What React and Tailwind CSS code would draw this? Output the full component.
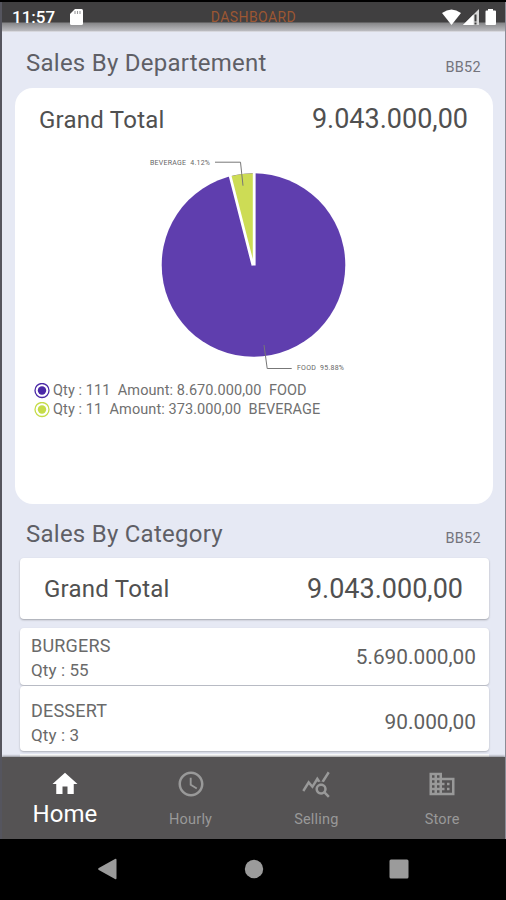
import { MdHome, MdAccessTime, MdQueryStats, MdBusiness } from 'react-icons/md';

const departments = [
  { name: 'FOOD', qty: 111, amount: '8.670.000,00', color: '#4a28a6' },
  { name: 'BEVERAGE', qty: 11, amount: '373.000,00', color: '#c5dc48' },
];

const categories = [
  { name: 'BURGERS', qty: 55, amount: '5.690.000,00', height: 'h-[57px] pt-0.5' },
  { name: 'DESSERT', qty: 3, amount: '90.000,00', height: 'h-[65px] pt-[9px]' },
];

const tabs = [
  { label: 'Home', icon: MdHome, active: true },
  { label: 'Hourly', icon: MdAccessTime },
  { label: 'Selling', icon: MdQueryStats },
  { label: 'Store', icon: MdBusiness },
];

function StatusBar() {
  return (
    <header className="h-[30px] shrink-0 bg-[linear-gradient(to_bottom,#403f40_0,#403f40_20px,#868688_21px,#bcbcc0_29px,#f2f3fa_30px)]">
      <div className="grid h-[27px] grid-cols-3 items-center">
        <div className="flex items-center pt-[3px] pl-[10px] text-white">
          <span className="text-[17px] leading-5 font-medium">11:57</span>
          <svg className="ml-[15px]" width="13" height="16" viewBox="0 0 13 16">
            <path d="M5 0h6.5Q13 0 13 1.500V14.500Q13 16 11.500 16h-10Q0 16 0 14.500V5z" fill="#fff" />
            <path d="M5 2v3M7.500 2v3M10 2v3" stroke="#9a9a9c" strokeWidth="1.100" />
          </svg>
        </div>
        <span className="pt-[3px] text-center text-[14px] leading-5 tracking-[0.4px] text-[#9c5733]">DASHBOARD</span>
        <svg className="ml-auto mr-[8px] mt-[3px]" width="55" height="17" viewBox="0 0 55 17">
          <path d="M0 4Q9.500-3 19 4L9.500 16z" fill="#fff" />
          <path d="M37 0V16H21z" fill="#d8d8d8" />
          <path d="M31.500 5.500V16H21z" fill="#fff" />
          <path d="M33.500 5.500v7M33.500 13.500v2" stroke="#3c3c3c" strokeWidth="2" />
          <path d="M46 0h5v1.500h2q1 0 1 1v12.500q0 1-1 1h-8.500q-1 0-1-1V2.500q0-1 1-1H46z" fill="#fff" />
        </svg>
      </div>
    </header>
  );
}

function SectionTitle({ title, className }) {
  return (
    <div className={`flex items-center justify-between pr-6 pl-6 ${className}`}>
      <h2 className="text-[24px] leading-8 tracking-[0.25px] text-[#5f5f66]">{title}</h2>
      <span className="pt-[9px] text-[14.5px] leading-5 tracking-[0.3px] text-[#74747c]">BB52</span>
    </div>
  );
}

function GrandTotal({ className }) {
  return (
    <div className={`flex items-center justify-between ${className}`}>
      <span className="pt-px text-[24px] leading-8 tracking-[0.25px] text-[#505050]">Grand Total</span>
      <span className="text-[27px] leading-8 text-[#505050]">9.043.000,00</span>
    </div>
  );
}

function PieChart() {
  return (
    <svg className="mx-auto block" width="240" height="230" viewBox="134 150 240 230" fontFamily="Roboto, sans-serif">
      <circle cx="253.500" cy="265" r="91.800" fill="#5f3eae" />
      <path d="M253.500 265L230 176.300A91.800 91.800 0 0 1 253.500 173.200z" fill="#cddc55" />
      <path d="M254.200 265.500V172M253 265.500L230 175.500" stroke="#fff" strokeWidth="2.800" fill="none" />
      <path d="M215 162.200h25.500l2.500 23.500" stroke="#777" fill="none" />
      <path d="M264 345l3.200 23.500h24.500" stroke="#777" fill="none" />
      <text x="150" y="164.500" fontSize="7" fill="#666" textLength="60" xmlSpace="preserve">BEVERAGE  4.12%</text>
      <text x="297" y="370.300" fontSize="7" fill="#666" textLength="47" xmlSpace="preserve">FOOD  95.88%</text>
    </svg>
  );
}

function Legend() {
  return (
    <ul className="mt-0.5 pl-[18.5px]">
      {departments.map((d) => (
        <li key={d.name} className="flex h-[18.5px] items-center gap-[3.5px] text-[14.5px] tracking-[0.08px] whitespace-pre text-[#707070]">
          <svg width="16" height="16" viewBox="0 0 16 16">
            <circle cx="8" cy="7.500" r="7" fill="none" stroke={d.color} strokeWidth="1.300" />
            <circle cx="8" cy="7.500" r="4.200" fill={d.color} />
          </svg>
          <span>{`Qty : ${d.qty}  Amount: ${d.amount}  ${d.name}`}</span>
        </li>
      ))}
    </ul>
  );
}

function CategoryRow({ name, qty, amount, height }) {
  return (
    <div className={`flex shrink-0 items-center justify-between rounded bg-white pr-[13px] pl-[11px] shadow-[0_1px_2px_rgba(0,0,0,0.25)] ${height}`}>
      <div className="text-[#6a6a6a]">
        <p className="text-[18px] leading-6 tracking-[0.2px]">{name}</p>
        <p className="text-[17px] leading-6 tracking-[0.1px]">{`Qty : ${qty}`}</p>
      </div>
      <span className="text-[20.8px] text-[#606060]">{amount}</span>
    </div>
  );
}

function TabBar() {
  return (
    <nav className="grid h-[82px] shrink-0 grid-cols-4 bg-[#555354] shadow-[0_-1px_2px_rgba(0,0,0,0.4)]">
      {tabs.map(({ label, icon: Icon, active }) => (
        <div key={label} className={`flex flex-col items-center pt-3 ${active ? 'text-white' : 'text-[#999]'}`}>
          <Icon size={30} />
          <span className={active ? 'pt-px text-[24px] leading-7' : 'mt-[11px] text-[14.5px] leading-5 tracking-[0.2px]'}>{label}</span>
        </div>
      ))}
    </nav>
  );
}

function SystemNav() {
  return (
    <div className="flex h-[59px] shrink-0 items-center justify-center bg-black">
      <svg width="311" height="22" viewBox="0 0 311 22" fill="#9b9b9b">
        <path d="M17 1q1.500-1 1.500 1v18q0 2-1.500 1L.8 12q-1.300-1 0-2z" />
        <circle cx="156" cy="11" r="9.200" />
        <rect x="291.500" y="1.500" width="19" height="19" rx="1.500" />
      </svg>
    </div>
  );
}

export default function App() {
  return (
    <div className="flex h-[900px] w-[506px] flex-col overflow-hidden bg-black pt-0.5 font-['Roboto',sans-serif]">
      <div className="flex h-[837px] shrink-0 flex-col overflow-hidden border-r border-l-2 border-r-[#8c8c96] border-l-[#55555e] bg-[#e6e9f4]">
        <StatusBar />
        <main className="flex min-h-0 flex-1 flex-col overflow-hidden">
          <SectionTitle title="Sales By Departement" className="h-[56px] shrink-0 pt-1.5" />
          <section className="mr-3 ml-[13px] h-[416px] shrink-0 rounded-[18px] bg-white">
            <GrandTotal className="h-[62px] pr-[25px] pl-6" />
            <PieChart />
            <Legend />
          </section>
          <SectionTitle title="Sales By Category" className="h-[54px] shrink-0 pt-1.5" />
          <div className="mr-4 ml-[18px] flex min-h-0 flex-1 flex-col">
            <GrandTotal className="mb-[9px] h-[61px] shrink-0 rounded bg-white pr-[26px] pl-6 shadow-[0_1px_2px_rgba(0,0,0,0.3)]" />
            <div className="flex flex-col gap-px">
              {categories.map((c) => (
                <CategoryRow key={c.name} {...c} />
              ))}
              <div className="mt-0.5 h-2 bg-white" />
            </div>
          </div>
        </main>
        <TabBar />
      </div>
      <SystemNav />
    </div>
  );
}
